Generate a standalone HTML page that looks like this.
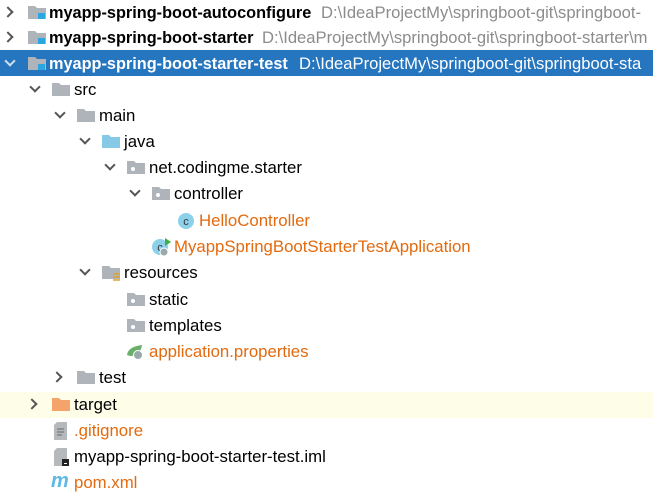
<!DOCTYPE html>
<html><head><meta charset="utf-8"><style>
body{margin:0;width:653px;height:499px;background:#fff;position:relative;overflow:hidden;font-family:"Liberation Sans",sans-serif;font-size:16.8px;color:#000}
.r{position:absolute;left:0;width:653px;height:26px;white-space:nowrap}
.t{position:absolute;top:3px;line-height:20px}
.b{font-weight:bold;font-size:16.3px}
.p{color:#8c8c8c;font-size:16.6px}
.o{color:#e36a0e}
.a{position:absolute;top:8px;width:6px;height:6px;border-right:2px solid #555;border-bottom:2px solid #555}
.dn{transform:rotate(45deg);top:6px}
.rt{transform:rotate(-45deg);top:8px}
.f{position:absolute;top:6px;width:18px;height:13px}
</style></head><body>
<div class="r" style="top:50px;height:26px;background:#2675bf"></div>
<div class="r" style="top:392px;height:26px;background:#fdfde8"></div>

<svg width="0" height="0" style="position:absolute"><defs>
<symbol id="fold" viewBox="0 0 18 13"><path d="M0 0h7l2 2h9v11H0z" fill="#aeb4b9"/></symbol>
</defs></svg>

<div class="r" style="top:0"><div class="a rt" style="left:4px"></div>
<svg class="f" style="left:28px" viewBox="0 0 18 13"><use href="#fold"/><rect x="10" y="7" width="7" height="6" fill="#2ca6e0"/></svg>
<span class="t b" style="left:49px">myapp-spring-boot-autoconfigure</span><span class="t p" style="left:321px">D:\IdeaProjectMy\springboot-git\springboot-</span></div>
<div class="r" style="top:25px"><div class="a rt" style="left:4px"></div>
<svg class="f" style="left:28px" viewBox="0 0 18 13"><use href="#fold"/><rect x="10" y="7" width="7" height="6" fill="#2ca6e0"/></svg>
<span class="t b" style="left:49px">myapp-spring-boot-starter</span><span class="t p" style="left:262px">D:\IdeaProjectMy\springboot-git\springboot-starter\m</span></div>
<div class="r" style="top:51px"><div class="a dn" style="left:6px;border-color:#cfe0f0"></div>
<svg class="f" style="left:28px" viewBox="0 0 18 13"><use href="#fold"/><rect x="10" y="7" width="7" height="6" fill="#2ca6e0"/></svg>
<span class="t b" style="left:49px;color:#fff">myapp-spring-boot-starter-test</span><span class="t p" style="left:299px;color:#fff">D:\IdeaProjectMy\springboot-git\springboot-sta</span></div>
<div class="r" style="top:77px"><div class="a dn" style="left:31px"></div>
<svg class="f" style="left:52px" viewBox="0 0 18 13"><use href="#fold"/></svg>
<span class="t" style="left:74px">src</span></div>
<div class="r" style="top:103px"><div class="a dn" style="left:56px"></div>
<svg class="f" style="left:77px" viewBox="0 0 18 13"><use href="#fold"/></svg>
<span class="t" style="left:99px">main</span></div>
<div class="r" style="top:129px"><div class="a dn" style="left:81px"></div>
<svg class="f" style="left:102px" viewBox="0 0 18 13"><path d="M0 0h7l2 2h9v11H0z" fill="#85c9e6"/></svg>
<span class="t" style="left:124px">java</span></div>
<div class="r" style="top:155px"><div class="a dn" style="left:106px"></div>
<svg class="f" style="left:127px" viewBox="0 0 18 13"><use href="#fold"/><circle cx="6" cy="8" r="2" fill="#fff"/></svg>
<span class="t" style="left:149px">net.codingme.starter</span></div>
<div class="r" style="top:181px"><div class="a dn" style="left:131px"></div>
<svg class="f" style="left:152px" viewBox="0 0 18 13"><use href="#fold"/><circle cx="6" cy="8" r="2" fill="#fff"/></svg>
<span class="t" style="left:174px">controller</span></div>
<div class="r" style="top:208px">
<svg style="position:absolute;left:177px;top:4px" width="18" height="18"><circle cx="9" cy="9" r="8" fill="#8dd0ea"/><text x="9" y="13" font-size="11" text-anchor="middle" fill="#333" font-family="Liberation Sans">c</text></svg>
<span class="t o" style="left:199px">HelloController</span></div>
<div class="r" style="top:234px">
<svg style="position:absolute;left:152px;top:3px" width="20" height="20"><circle cx="8" cy="10" r="8" fill="#8dd0ea"/><text x="8" y="14" font-size="11" text-anchor="middle" fill="#333" font-family="Liberation Sans">c</text><path d="M13 1l6 4-6 4z" fill="#3cb043"/><circle cx="12" cy="15" r="4" fill="#9aa" stroke="#fff"/></svg>
<span class="t o" style="left:174px">MyappSpringBootStarterTestApplication</span></div>
<div class="r" style="top:260px"><div class="a dn" style="left:81px"></div>
<svg class="f" style="left:102px;height:16px" viewBox="0 0 18 16"><path d="M0 0h7l2 2h9v11H0z" fill="#aeb4b9"/><path d="M11 8h7M11 11h7M11 14h7" stroke="#e0a030" stroke-width="1.5"/></svg>
<span class="t" style="left:124px">resources</span></div>
<div class="r" style="top:287px">
<svg class="f" style="left:127px" viewBox="0 0 18 13"><use href="#fold"/><circle cx="6" cy="8" r="2" fill="#fff"/></svg>
<span class="t" style="left:149px">static</span></div>
<div class="r" style="top:313px">
<svg class="f" style="left:127px" viewBox="0 0 18 13"><use href="#fold"/><circle cx="6" cy="8" r="2" fill="#fff"/></svg>
<span class="t" style="left:149px">templates</span></div>
<div class="r" style="top:339px">
<svg style="position:absolute;left:126px;top:4px" width="20" height="18"><path d="M1 12C2 5 9 3 16 2c-1 6-4 11-12 11z" fill="#6ab06a"/><circle cx="12" cy="12" r="4.5" fill="#9aa" stroke="#fff"/></svg>
<span class="t o" style="left:149px">application.properties</span></div>
<div class="r" style="top:365px"><div class="a rt" style="left:53px"></div>
<svg class="f" style="left:77px" viewBox="0 0 18 13"><use href="#fold"/></svg>
<span class="t" style="left:99px">test</span></div>
<div class="r" style="top:392px"><div class="a rt" style="left:28px"></div>
<svg class="f" style="left:52px" viewBox="0 0 18 13"><path d="M0 0h7l2 2h9v11H0z" fill="#f4a36b"/></svg>
<span class="t" style="left:74px">target</span></div>
<div class="r" style="top:418px">
<svg style="position:absolute;left:54px;top:4px" width="14" height="18"><path d="M3 0h10v18H0V3z" fill="#b5b9bc"/><path d="M3 7h7M3 10h7M3 13h5" stroke="#666"/></svg>
<span class="t o" style="left:74px">.gitignore</span></div>
<div class="r" style="top:444px">
<svg style="position:absolute;left:54px;top:4px" width="16" height="18"><path d="M3 0h10v18H0V3z" fill="#b5b9bc"/><rect x="8" y="11" width="7" height="7" fill="#222"/><rect x="10" y="15" width="3" height="1" fill="#fff"/></svg>
<span class="t" style="left:74px">myapp-spring-boot-starter-test.iml</span></div>
<div class="r" style="top:470px">
<span class="t" style="left:51px;color:#5fb8e6;font-weight:bold;font-style:italic;font-size:20px;top:1px">m</span>
<span class="t o" style="left:74px">pom.xml</span></div>
</body></html>
